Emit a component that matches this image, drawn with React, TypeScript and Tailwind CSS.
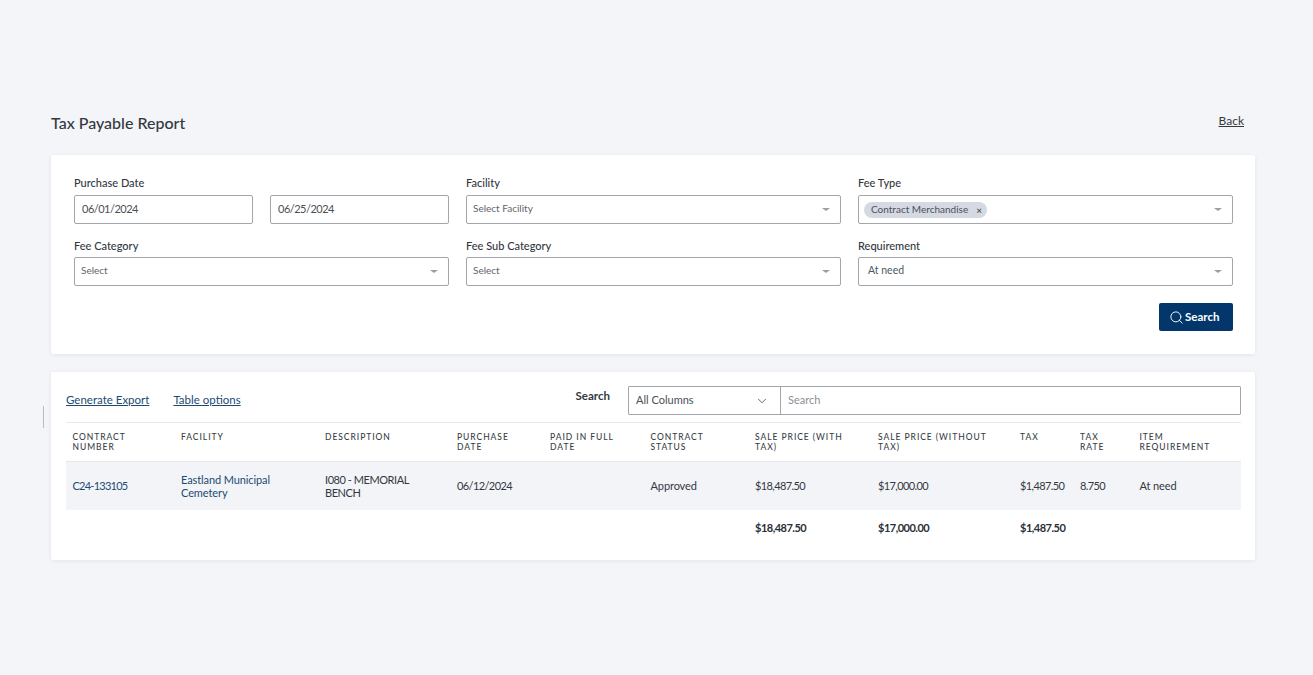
import React from 'react';
import { ChevronDown, Search } from 'lucide-react';

const headerCell = 'px-[6.5px] pt-[9px] pb-[8px] align-top text-left text-[8.5px] leading-[10px] font-medium tracking-[0.95px] uppercase whitespace-pre-line text-[#3a3f47]';
const bodyCell = 'px-[6.5px] align-middle text-[11px] leading-[13px] tracking-[-0.1px] text-[#33383f]';
const descCell = 'px-[6.5px] align-middle text-[11px] leading-[13px] tracking-[-0.45px] text-[#33383f]';
const numCell = 'px-[6.5px] align-middle text-[11px] leading-[13px] tracking-[-0.6px] text-[#33383f]';
const totalCell = 'px-[6.5px] pt-[11px] align-top text-[11px] leading-[13px] tracking-[-0.5px] font-bold text-[#2b2f36]';

const columns = [
  { label: 'Contract Number', width: 'w-[108.5px]' },
  { label: 'Facility', width: 'w-[144px]' },
  { label: 'Description', width: 'w-[132px]' },
  { label: 'Purchase Date', width: 'w-[93px]' },
  { label: 'Paid In Full Date', width: 'w-[100.5px]' },
  { label: 'Contract Status', width: 'w-[104.5px]' },
  { label: 'Sale Price (With Tax)', width: 'w-[123px]' },
  { label: 'Sale Price (Without Tax)', width: 'w-[142px]' },
  { label: 'Tax', width: 'w-[60px]' },
  { label: 'Tax\nRate', width: 'w-[59.5px]' },
  { label: 'Item Requirement', width: 'w-[108px]' },
];

function Caret() {
  return <span className="w-0 h-0 border-x-[4px] border-x-transparent border-t-[3px] border-t-[#9a9ea6]" />;
}

function Field({ label, tight, children }: { label: string; tight?: boolean; children: React.ReactNode }) {
  return (
    <div className="flex flex-col">
      <label className={`${tight ? 'h-[19px]' : 'h-[20px]'} pt-[1px] text-[11px] leading-[14px] font-medium text-[#33383f]`}>{label}</label>
      {children}
    </div>
  );
}

function SelectBox({ value, muted, pad = 'pl-[6px]' }: { value: string; muted?: boolean; pad?: string }) {
  return (
    <div className={`h-[29px] ${pad} pr-[10px] flex items-center justify-between border border-[#a3a6ab] rounded-[2px] bg-white`}>
      <span className={muted ? 'pb-[2px] text-[10px] text-[#5f646c]' : 'pb-[1px] text-[10.5px] text-[#4b5a66]'}>{value}</span>
      <Caret />
    </div>
  );
}

function App() {
  return (
    <div className="relative min-h-[675px] bg-[#f3f5f9] pl-[51px] pr-[58px] pt-[112px] font-['Lato','Open_Sans',sans-serif]">
      <div className="absolute left-[43px] top-[406px] w-px h-[22px] bg-[#b9bcc2]" />

      <div className="flex items-start justify-between h-[43px]">
        <h1 className="text-[16px] leading-[22px] font-medium text-[#33383f]">Tax Payable Report</h1>
        <a href="#" className="mr-[11px] text-[12px] leading-[18px] underline text-[#33383f]">Back</a>
      </div>

      <div className="h-[199px] bg-white rounded-[2px] shadow-[0_1px_4px_rgba(30,40,60,0.08)] pl-[23px] pr-[22px] pt-[20px]">
        <div className="grid grid-cols-3 gap-x-[17px] gap-y-[14px]">
          <div className="grid grid-cols-2 gap-x-[17px]">
            <Field label="Purchase Date">
              <div className="h-[29px] pl-[7px] flex items-center border border-[#a3a6ab] rounded-[2px] text-[11px] tracking-[-0.5px] text-[#4a4f57]">06/01/2024</div>
            </Field>
            <div className="pt-[20px]">
              <div className="h-[29px] pl-[7px] flex items-center border border-[#a3a6ab] rounded-[2px] text-[11px] tracking-[-0.5px] text-[#4a4f57]">06/25/2024</div>
            </div>
          </div>
          <Field label="Facility">
            <SelectBox value="Select Facility" muted />
          </Field>
          <Field label="Fee Type">
            <div className="h-[29px] pl-[5px] pr-[10px] flex items-center justify-between border border-[#a3a6ab] rounded-[2px]">
              <span className="h-[16px] pl-[7px] pr-[5px] flex items-center gap-[8px] rounded-full bg-[#d5d9e2] text-[10px] text-[#4a505a]">
                Contract Merchandise
                <span className="text-[10px] leading-none text-[#33383f]">×</span>
              </span>
              <Caret />
            </div>
          </Field>
          <Field label="Fee Category" tight>
            <SelectBox value="Select" muted />
          </Field>
          <Field label="Fee Sub Category" tight>
            <SelectBox value="Select" muted />
          </Field>
          <Field label="Requirement" tight>
            <SelectBox value="At need" pad="pl-[9px]" />
          </Field>
        </div>
        <div className="flex justify-end mt-[17px]">
          <button className="w-[74px] h-[28px] pl-[10px] flex items-center gap-[1px] rounded-[2px] bg-[#03376b] text-white text-[11.5px] font-bold">
            <Search size={15} strokeWidth={1.5} />
            Search
          </button>
        </div>
      </div>

      <div className="mt-[18px] h-[188px] bg-white rounded-[2px] shadow-[0_1px_4px_rgba(30,40,60,0.08)] pl-[15px] pr-[14px] pt-[14px]">
        <div className="flex items-start h-[37px] border-b border-[#e6e8ec]">
          <a href="#" className="mt-[6px] text-[11.5px] leading-[16px] underline text-[#1c4a73]">Generate Export</a>
          <a href="#" className="ml-[24px] mt-[6px] text-[11.5px] leading-[16px] underline text-[#1c4a73]">Table options</a>
          <span className="ml-auto mr-[18px] mt-[2px] text-[11.5px] leading-[16px] font-bold text-[#33383f]">Search</span>
          <div className="w-[613px] h-[29px] flex border border-[#a3a6ab] rounded-[1px]">
            <div className="w-[152px] pl-[7px] pr-[11px] flex items-center justify-between border-r border-[#a3a6ab] text-[11px] text-[#4a4f57]">
              All Columns
              <ChevronDown size={14} strokeWidth={1.5} className="text-[#4a4f57]" />
            </div>
            <div className="flex-1 pl-[7px] flex items-center text-[11px] text-[#8a8f98]">Search</div>
          </div>
        </div>

        <table className="table-fixed w-full border-collapse">
          <colgroup>
            {columns.map((c) => (
              <col key={c.label} className={c.width} />
            ))}
          </colgroup>
          <thead>
            <tr className="h-[38px] border-b border-[#e6e8ec]">
              {columns.map((c) => (
                <th key={c.label} className={headerCell}>{c.label}</th>
              ))}
            </tr>
          </thead>
          <tbody>
            <tr className="h-[49px] bg-[#f3f4f8]">
              <td className={numCell}><a href="#" className="tracking-[-0.75px] text-[#1c4a73]">C24-133105</a></td>
              <td className={bodyCell}><a href="#" className="text-[#1c4a73]">Eastland Municipal Cemetery</a></td>
              <td className={descCell}>I080 - MEMORIAL BENCH</td>
              <td className={numCell}>06/12/2024</td>
              <td className={bodyCell}></td>
              <td className={bodyCell}>Approved</td>
              <td className={numCell}>$18,487.50</td>
              <td className={numCell}>$17,000.00</td>
              <td className={numCell}>$1,487.50</td>
              <td className={numCell}>8.750</td>
              <td className={bodyCell}>At need</td>
            </tr>
            <tr>
              <td className={totalCell} colSpan={6}></td>
              <td className={totalCell}>$18,487.50</td>
              <td className={totalCell}>$17,000.00</td>
              <td className={totalCell}>$1,487.50</td>
              <td className={totalCell} colSpan={2}></td>
            </tr>
          </tbody>
        </table>
      </div>
    </div>
  );
}

export default App;
